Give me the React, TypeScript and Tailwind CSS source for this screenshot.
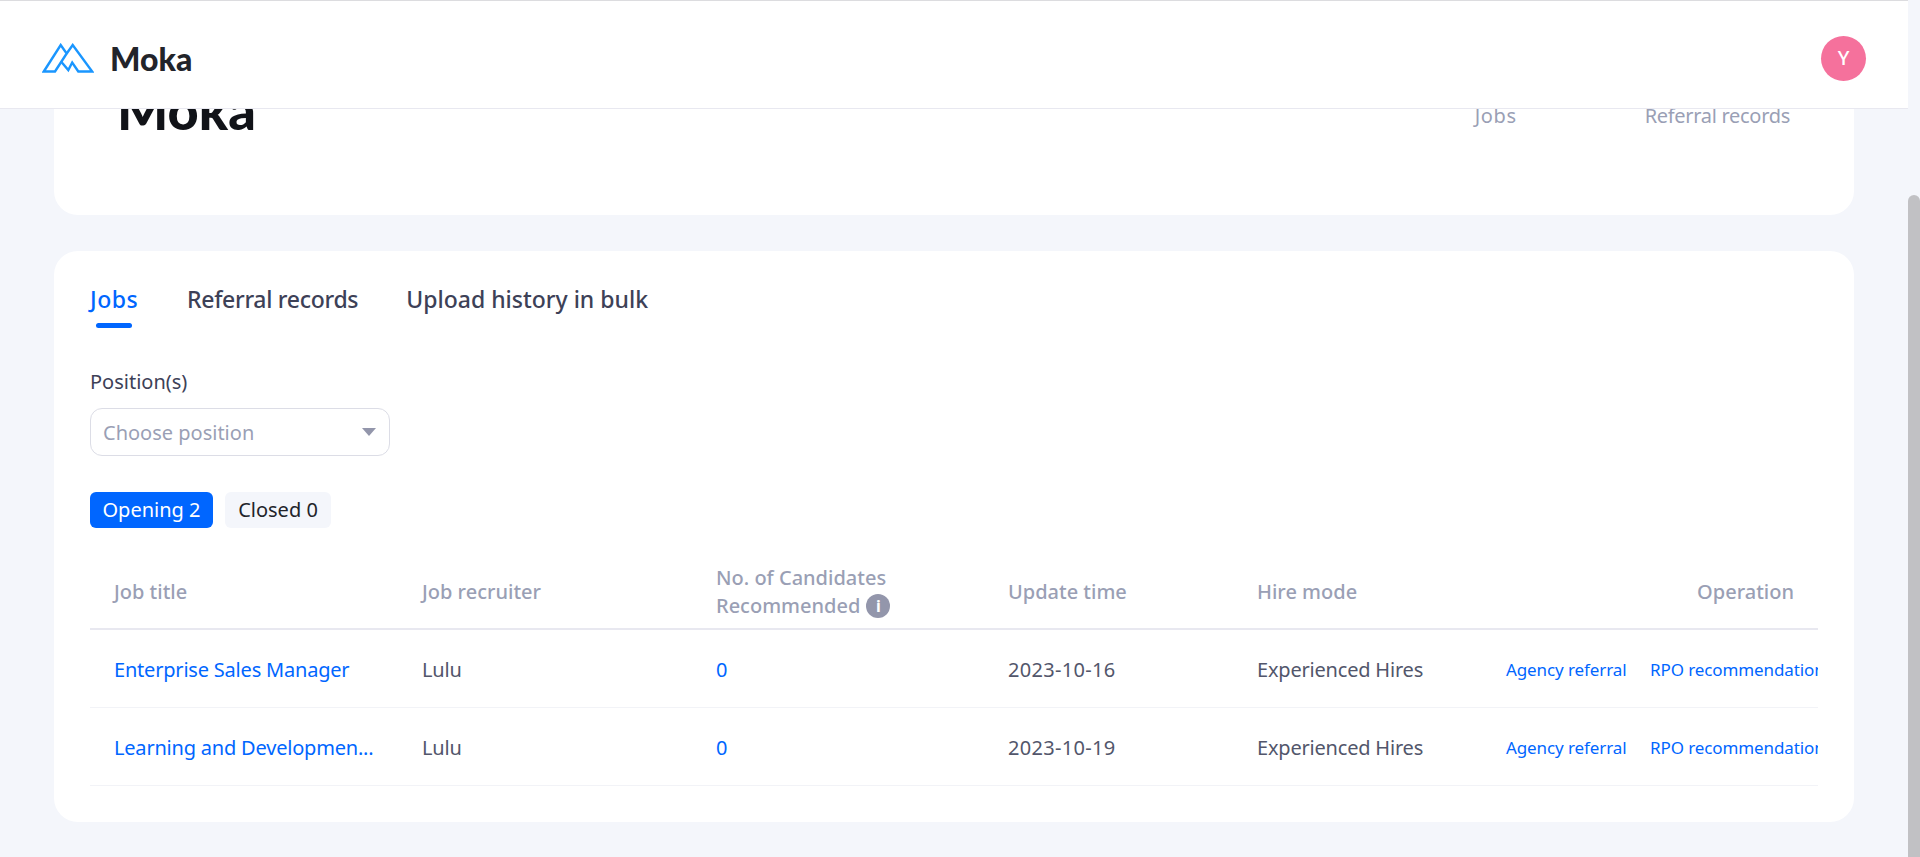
const font = { fontFamily: '"Noto Sans", "Open Sans", sans-serif' };
const logoFont = { fontFamily: 'Lato, "Liberation Sans", sans-serif' };

function Logo() {
  return (
    <svg width="52" height="30" viewBox="0 0 52 30" fill="none" stroke="#1a96ff" strokeWidth="2.4" strokeLinejoin="miter">
      <path d="M1.8 28.5 L18.7 2 L24.7 10.5 L13 28.5 Z" />
      <path d="M24.7 10.5 L30.7 2 L50.2 28.5 L36.3 28.5 L30.2 19.5 L26.3 27 L19 18.5" />
    </svg>
  );
}

const rows = [
  { t: "Enterprise Sales Manager", d: "2023-10-16" },
  { t: "Learning and Developmen...", d: "2023-10-19" },
];

export default function App() {
  return (
    <div style={font} className="h-[857px] w-full overflow-hidden bg-[#f4f6fb] flex">
      <div className="w-[1908px] h-full flex flex-col shrink-0">
        <header className="h-[109px] shrink-0 bg-white border-t border-t-[#dcdcdf] border-b border-b-[#e8e8f0] flex items-center justify-between pl-[42px] pr-[42px] pt-[7px]">
          <div className="flex items-center gap-[16px]">
            <Logo />
            <span style={logoFont} className="text-[32px] font-black text-[#22242a] leading-none mt-[1px]">Moka</span>
          </div>
          <div className="w-[45px] h-[45px] rounded-full bg-[#f5719c] text-white text-[20px] font-medium flex items-center justify-center">Y</div>
        </header>
        <main className="flex-1 overflow-hidden px-[54px]">
          <section className="h-[106px] bg-white rounded-b-[24px] flex justify-between pl-[63px] pr-[64px] overflow-hidden">
            <div style={logoFont} className="text-[54px] font-black text-[#111318] leading-none -mt-[26px]">Moka</div>
            <div className="flex gap-[128px] text-[20px] tracking-[-0.3px] text-[#9a9fb5] leading-[24px] -mt-[5px]">
              <span className="tracking-[0.6px]">Jobs</span>
              <span>Referral records</span>
            </div>
          </section>
          <section className="mt-[36px] h-[571px] bg-white rounded-[24px] px-[36px] pt-[33px]">
            <div className="flex gap-[48px] text-[23px] font-medium leading-[30px] text-[#3d4157]">
              <div className="relative w-[49px] text-[#0066ff] tracking-[0.5px]">
                Jobs
                <div className="absolute left-[6px] top-[39px] w-[36px] h-[5px] rounded-full bg-[#0066ff]" />
              </div>
              <div className="tracking-[-0.3px]">Referral records</div>
              <div className="tracking-[0px]">Upload history in bulk</div>
            </div>
            <div className="mt-[55px] text-[20px] leading-[26px] text-[#3d4157]">Position(s)</div>
            <div className="mt-[13px] w-[300px] h-[48px] rounded-[12px] border border-[#dcdde6] px-[12px] pt-[2px] flex items-center justify-between text-[20px] text-[#9a9fb5]">
              <span>Choose position</span>
              <span className="w-0 h-0 mr-[1px] mb-[2px] border-x-[7px] border-x-transparent border-t-[8px] border-t-[#9396ab]" />
            </div>
            <div className="mt-[36px] flex gap-[12px] text-[20px]">
              <div className="h-[36px] w-[123px] rounded-[6px] bg-[#0066ff] text-white flex items-center justify-center">Opening 2</div>
              <div className="h-[36px] w-[106px] rounded-[6px] bg-[#f4f6fb] text-[#22242a] flex items-center justify-center">Closed 0</div>
            </div>
            <div className="mt-[33px] w-[1728px] overflow-hidden">
              <div className="grid grid-cols-[308px_294px_292px_249px_1fr] h-[69px] pb-[6px] items-center border-b-2 border-b-[#e8e8f0] text-[20px] font-medium text-[#9a9fb5] leading-[28px]">
                <div className="pl-[24px]">Job title</div>
                <div className="pl-[24px]">Job recruiter</div>
                <div className="pl-[24px]">
                  <div>No. of Candidates</div>
                  <div className="flex items-center gap-[6px]">
                    Recommended
                    <span className="w-[24px] h-[24px] rounded-full bg-[#9396ab] text-white text-[16px] font-bold flex items-center justify-center">i</span>
                  </div>
                </div>
                <div className="pl-[24px]">Update time</div>
                <div className="flex justify-between pl-[24px] pr-[24px]">
                  <span>Hire mode</span>
                  <span>Operation</span>
                </div>
              </div>
              {rows.map((r) => (
                <div key={r.d} className="grid grid-cols-[308px_294px_292px_249px_1fr] h-[78px] pt-[2px] items-center border-b border-b-[#f2f3f7] text-[20px] tracking-[-0.2px] text-[#52566b]">
                  <div className="pl-[24px] text-[#0066ff] whitespace-nowrap">{r.t}</div>
                  <div className="pl-[24px]">Lulu</div>
                  <div className="pl-[24px] text-[#0066ff]">0</div>
                  <div className="pl-[24px] tracking-[0.3px]">{r.d}</div>
                  <div className="pl-[24px] flex items-center whitespace-nowrap overflow-hidden">
                    <span className="w-[249px] shrink-0">Experienced Hires</span>
                    <span className="text-[17px] tracking-[-0.1px] text-[#0066ff] w-[144px] shrink-0">Agency referral</span>
                    <span className="text-[17px] tracking-[-0.1px] text-[#0066ff]">RPO recommendation</span>
                  </div>
                </div>
              ))}
            </div>
          </section>
        </main>
      </div>
      <div className="w-[12px] h-full flex flex-col">
        <div className="h-[195px] shrink-0" />
        <div className="flex-1 bg-[#c1c1c4] rounded-t-[6px]" />
      </div>
    </div>
  );
}
